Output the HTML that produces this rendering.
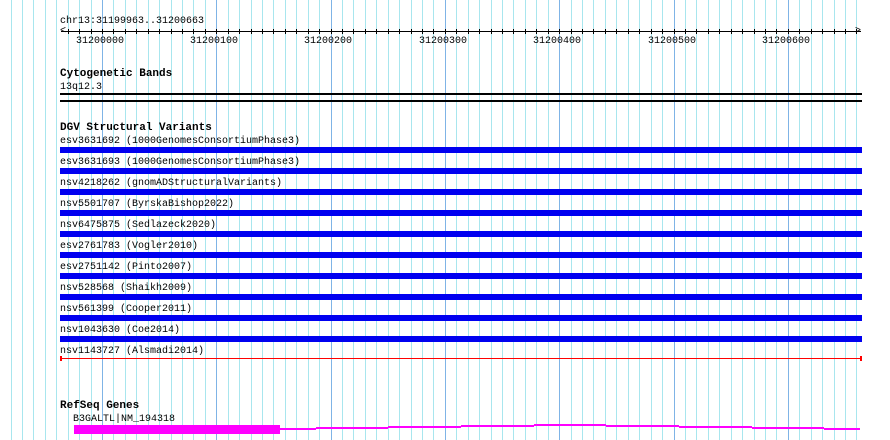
<!DOCTYPE html>
<html><head><style>
body{margin:0;width:890px;height:440px;background:#fff;position:relative;overflow:hidden;font-family:"Liberation Mono",monospace;font-size:10px;color:#000}
.g{position:absolute;top:0;width:1px;height:440px;background:#a8e6ee}
.g.m{background:#7fb4e6}
.t{position:absolute;left:60px;white-space:pre;line-height:11px}
.b{font-weight:bold;font-size:11px}
.bar{position:absolute;left:60px;width:802px;height:6px;background:#0000f0}
.hl{position:absolute;left:60px;width:802px;height:2px;background:#000}
.tk{position:absolute;width:1px;height:5px;top:29px;background:#000}
.seg{position:absolute;height:2px;background:#ff00ff}
</style></head><body>
<div id="grid"></div>
<div class="t" style="top:16px">chr13:31199963..31200663</div>
<div style="position:absolute;left:61px;top:31px;width:800px;height:1px;background:#000"></div>
<div style="position:absolute;left:60px;top:27px;font-size:10px;line-height:9px">&lt;</div>
<div style="position:absolute;left:855px;top:27px;font-size:10px;line-height:9px">&gt;</div>
<div id="ticks"></div>
<div class="t" style="left:76px;top:36px">31200000</div>
<div class="t" style="left:190px;top:36px">31200100</div>
<div class="t" style="left:304px;top:36px">31200200</div>
<div class="t" style="left:419px;top:36px">31200300</div>
<div class="t" style="left:533px;top:36px">31200400</div>
<div class="t" style="left:648px;top:36px">31200500</div>
<div class="t" style="left:762px;top:36px">31200600</div>
<div class="t b" style="top:69px">Cytogenetic Bands</div>
<div class="t" style="top:82px">13q12.3</div>
<div class="hl" style="top:93px"></div>
<div class="hl" style="top:100px"></div>
<div class="t b" style="top:123px">DGV Structural Variants</div>
<div class="t" style="top:136px">esv3631692 (1000GenomesConsortiumPhase3)</div><div class="bar" style="top:147px"></div>
<div class="t" style="top:157px">esv3631693 (1000GenomesConsortiumPhase3)</div><div class="bar" style="top:168px"></div>
<div class="t" style="top:178px">nsv4218262 (gnomADStructuralVariants)</div><div class="bar" style="top:189px"></div>
<div class="t" style="top:199px">nsv5501707 (ByrskaBishop2022)</div><div class="bar" style="top:210px"></div>
<div class="t" style="top:220px">nsv6475875 (Sedlazeck2020)</div><div class="bar" style="top:231px"></div>
<div class="t" style="top:241px">esv2761783 (Vogler2010)</div><div class="bar" style="top:252px"></div>
<div class="t" style="top:262px">esv2751142 (Pinto2007)</div><div class="bar" style="top:273px"></div>
<div class="t" style="top:283px">nsv528568 (Shaikh2009)</div><div class="bar" style="top:294px"></div>
<div class="t" style="top:304px">nsv561399 (Cooper2011)</div><div class="bar" style="top:315px"></div>
<div class="t" style="top:325px">nsv1043630 (Coe2014)</div><div class="bar" style="top:336px"></div>
<div class="t" style="top:346px">nsv1143727 (Alsmadi2014)</div>
<div style="position:absolute;left:60px;top:358px;width:802px;height:1px;background:#f00"></div>
<div style="position:absolute;left:60px;top:356px;width:2px;height:5px;background:#f00"></div>
<div style="position:absolute;left:860px;top:356px;width:2px;height:5px;background:#f00"></div>
<div class="t b" style="top:401px">RefSeq Genes</div>
<div class="t" style="left:73px;top:414px">B3GALTL|NM_194318</div>
<div style="position:absolute;left:74px;top:425px;width:206px;height:9px;background:#ff00ff"></div>
<div class="seg" style="left:280px;width:36px;top:428px"></div>
<div class="seg" style="left:316px;width:72px;top:427px"></div>
<div class="seg" style="left:388px;width:73px;top:426px"></div>
<div class="seg" style="left:461px;width:73px;top:425px"></div>
<div class="seg" style="left:534px;width:72px;top:424px"></div>
<div class="seg" style="left:606px;width:73px;top:425px"></div>
<div class="seg" style="left:679px;width:73px;top:426px"></div>
<div class="seg" style="left:752px;width:72px;top:427px"></div>
<div class="seg" style="left:824px;width:36px;top:428px"></div>
<script>
var h='',g='';for(var k=-9;k<68;k++){var x=Math.round(102+k*11.43);
if(x>=0&&x<=862)g+='<div class="g'+(k%10==0?' m':'')+'" style="left:'+x+'px"></div>';
if(x>62&&x<858)h+='<div class="tk" style="left:'+x+'px"></div>';}
document.getElementById('ticks').innerHTML=h;
document.getElementById('grid').innerHTML=g;
</script>
</body></html>
